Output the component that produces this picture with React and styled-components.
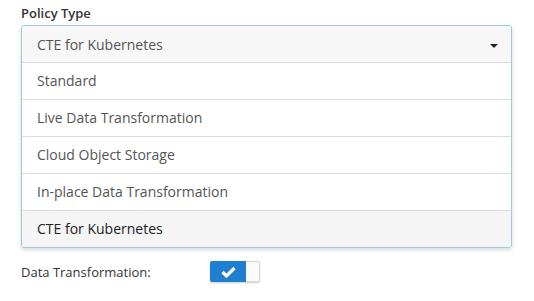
import styled, { createGlobalStyle } from "styled-components";

const GlobalStyle = createGlobalStyle`
  body {
    margin: 0;
    background: #ffffff;
    font-family: "Open Sans", "Liberation Sans", sans-serif;
  }
`;

const options = [
  "Standard",
  "Live Data Transformation",
  "Cloud Object Storage",
  "In-place Data Transformation",
  "CTE for Kubernetes",
];

export default function App() {
  const selected = "CTE for Kubernetes";
  return (
    <Page>
      <GlobalStyle />
      <Label>Policy Type</Label>
      <Select>
        <Trigger>
          <span>{selected}</span>
          <Caret />
        </Trigger>
        {options.map((opt) => (
          <Option key={opt} active={opt === selected}>
            {opt}
          </Option>
        ))}
      </Select>
      <Row>
        <RowLabel>Data Transformation:</RowLabel>
        <Toggle>
          <ToggleOn>
            <svg width="15" height="12" viewBox="0 0 15 12">
              <path
                d="M1.5 6 L5.5 10 L13.5 2"
                fill="none"
                stroke="#fff"
                strokeWidth="3.2"
              />
            </svg>
          </ToggleOn>
          <Knob />
        </Toggle>
      </Row>
    </Page>
  );
}

const Page = styled.div`
  width: 534px;
  height: 301px;
  padding: 4px 22px 0 21px;
  box-sizing: border-box;
`;

const Label = styled.div`
  font-size: 13px;
  font-weight: 600;
  color: #333;
  height: 21px;
  line-height: 18px;
`;

const Select = styled.div`
  border: 1px solid #9fcadb;
  border-radius: 3px;
  box-shadow: 0 2px 4px rgba(0, 0, 0, 0.15);
  overflow: hidden;
`;

const Trigger = styled.div`
  display: flex;
  align-items: center;
  justify-content: space-between;
  height: 36px;
  padding: 0 13px 0 15px;
  background: #f7f7f7;
  border-bottom: 1px solid #dcdcdc;
  font-size: 14px;
  color: #555;
`;

const Caret = styled.div`
  width: 0;
  height: 0;
  border-left: 4px solid transparent;
  border-right: 4px solid transparent;
  border-top: 4px solid #222;
  margin-top: 3px;
`;

const Option = styled.div`
  height: 36px;
  line-height: 36px;
  padding: 0 15px;
  font-size: 14px;
  color: ${(p) => (p.active ? "#222" : "#555")};
  background: ${(p) => (p.active ? "#f5f5f5" : "#fff")};
  border-bottom: ${(p) => (p.active ? "none" : "1px solid #dcdcdc")};
`;

const Row = styled.div`
  display: flex;
  align-items: center;
  margin-top: 13px;
`;

const RowLabel = styled.div`
  width: 189px;
  font-size: 13px;
  color: #333;
`;

const Toggle = styled.div`
  display: flex;
  width: 50px;
  height: 21px;
  border-radius: 2px;
  overflow: hidden;
  box-shadow: 0 1px 2px rgba(0, 0, 0, 0.2);
`;

const ToggleOn = styled.div`
  width: 36px;
  background: #1e7fd0;
  display: flex;
  align-items: center;
  justify-content: center;
`;

const Knob = styled.div`
  flex: 1;
  background: #fafafa;
  border: 1px solid #d6d6d6;
  border-left: none;
`;
